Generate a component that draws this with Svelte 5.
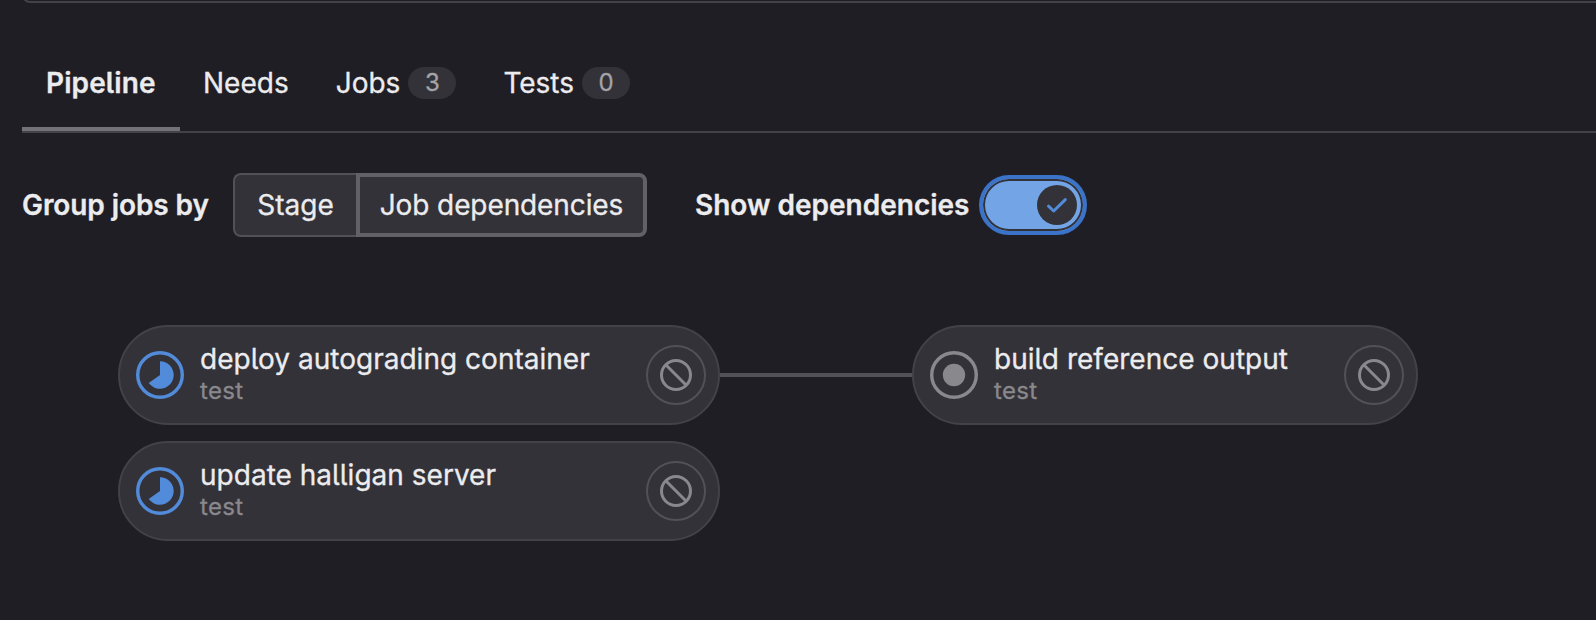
<script>
  const tabs = [
    { label: 'Pipeline', active: true },
    { label: 'Needs' },
    { label: 'Jobs', count: 3 },
    { label: 'Tests', count: 0 },
  ];
  const columns = [
    [
      { name: 'deploy autograding container', stage: 'test', status: 'running' },
      { name: 'update halligan server', stage: 'test', status: 'running' },
    ],
    [{ name: 'build reference output', stage: 'test', status: 'created' }],
  ];
</script>

<main>
  <div class="panel-end"></div>
  <nav>
    {#each tabs as tab}
      <div class="tab" class:active={tab.active}>
        <span>{tab.label}</span>
        {#if tab.count !== undefined}<span class="badge">{tab.count}</span>{/if}
      </div>
    {/each}
  </nav>

  <section class="controls">
    <strong class="group-label">Group jobs by</strong>
    <div class="segmented">
      <button class="stage">Stage</button>
      <button class="selected">Job dependencies</button>
    </div>
    <strong class="show-label">Show dependencies</strong>
    <button class="toggle" aria-label="Show dependencies">
      <span class="knob">
        <svg width="24" height="24" viewBox="0 0 24 24" fill="none"><path d="M3.5 13.2 8.7 18 20.3 6.6" stroke="#528bd9" stroke-width="3" stroke-linecap="round" stroke-linejoin="round" /></svg>
      </span>
    </button>
  </section>

  <section class="graph">
    {#each columns as jobs, i}
      {#if i > 0}<div class="link"></div>{/if}
      <div class="column" class:narrow={i > 0}>
        {#each jobs as job}
          <div class="job">
            {#if job.status === 'running'}
              <svg class="status running" viewBox="0 0 14 14">
                <circle cx="7" cy="7" r="6.5" fill="none" stroke="currentColor" />
                <path fill="currentColor" d="M7 3c2.2 0 4 1.8 4 4s-1.8 4-4 4c-1.3 0-2.5-.7-3.3-1.7L7 7V3" />
              </svg>
            {:else}
              <svg class="status" viewBox="0 0 14 14">
                <circle cx="7" cy="7" r="6.5" fill="none" stroke="currentColor" />
                <circle cx="7" cy="7" r="3.25" fill="currentColor" />
              </svg>
            {/if}
            <div class="text">
              <div class="name">{job.name}</div>
              <div class="sub">{job.stage}</div>
            </div>
            <button class="cancel" aria-label="Cancel">
              <svg width="32" height="32" viewBox="0 0 16 16" fill="none" stroke="currentColor" stroke-width="1.5"><circle cx="8" cy="8" r="7.25" /><path d="m3 3 10 10" /></svg>
            </button>
          </div>
        {/each}
      </div>
    {/each}
  </section>
</main>

<style>
  :global(body) { background: #1f1e24; }
  main {
    display: flow-root;
    width: 1596px; height: 620px; box-sizing: border-box; overflow: hidden;
    background: #1f1e24; color: #ececef; padding-left: 22px;
    font-family: Inter, "Liberation Sans", sans-serif;
    font-size: 28px; line-height: 32px;
    font-feature-settings: "cv05";
    -webkit-text-stroke: .3px currentColor;
  }
  button { font: inherit; font-feature-settings: inherit; color: inherit; margin: 0; padding: 0; box-sizing: border-box; }
  .panel-end {
    height: 20px; box-sizing: border-box; margin: -17px -10px 0 0;
    border: 2px solid #434248; border-top: 0; border-radius: 0 0 0 8px;
  }
  nav { display: flex; height: 130px; box-sizing: border-box; border-bottom: 2px solid #434248; }
  .tab {
    display: flex; align-items: center; gap: 8px; box-sizing: border-box;
    padding: 36px 24px 0; margin-right: -1px; white-space: nowrap; border-bottom: 4px solid transparent;
  }
  .active { width: 158px; font-weight: 600; border-color: #737278; letter-spacing: .1px; }
  .badge {
    min-width: 48px; height: 32px; box-sizing: border-box; border-radius: 16px;
    background: #333238; color: #a4a3a8; font-size: 24px; text-align: center;
  }
  .controls { display: flex; align-items: center; height: 64px; margin-top: 40px; white-space: nowrap; }
  strong { font-weight: 600; }
  .group-label { width: 211px; letter-spacing: -.08px; }
  .segmented { display: flex; height: 64px; width: 414px; }
  .segmented button { background: #333238; }
  .stage { width: 123px; border: 2px solid #535158; border-right: 0; border-radius: 8px 0 0 8px; }
  .segmented .selected { flex: 1; border: 4px solid #626168; border-radius: 0 8px 8px 0; letter-spacing: -.1px; }
  .show-label { width: 284px; margin-left: 48px; }
  .controls .toggle {
    display: flex; justify-content: flex-end; width: 108px; height: 60px; padding: 6px;
    border: 4px solid #3b73c8; border-radius: 30px;
    background: #73a5e6; box-shadow: inset 0 0 0 2px #333238;
  }
  .knob { display: flex; align-items: center; justify-content: center; width: 40px; height: 40px; border-radius: 50%; background: #333238; }
  .graph { display: flex; padding: 88px 0 0 96px; }
  .column { display: flex; flex-direction: column; gap: 16px; width: 602px; }
  .narrow { width: 506px; }
  .link { width: 192px; height: 4px; margin-top: 48px; background: #535158; }
  .job {
    display: flex; align-items: center; height: 100px; box-sizing: border-box;
    padding: 0 12px 0 16px; border: 2px solid #434248; border-radius: 50px; background: #333238;
  }
  .status { width: 48px; height: 48px; color: #89888d; }
  .running { color: #528bd9; }
  .text { flex: 1; padding-left: 16px; white-space: nowrap; }
  .name { line-height: 32px; letter-spacing: .02px; }
  .sub { color: #89888d; font-size: 24px; line-height: 32px; letter-spacing: .3px; }
  .cancel {
    display: flex; align-items: center; justify-content: center; width: 60px; height: 60px;
    border: 2px solid #535158; border-radius: 50%; background: transparent; color: #89888d;
  }
</style>
